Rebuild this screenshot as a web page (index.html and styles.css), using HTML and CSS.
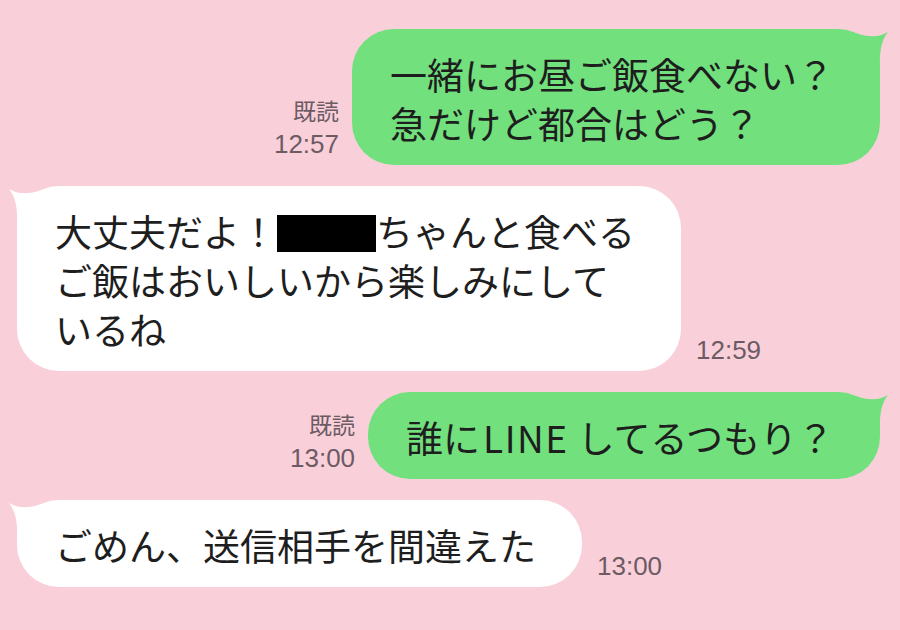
FILE: index.html
```html
<!DOCTYPE html>
<html lang="ja">
<head>
    <meta charset="UTF-8">
    <title>トーク</title>
    <link rel="stylesheet" href="styles.css">
</head>
<body>
    <div class="chat">
        <div class="row sent">
            <div class="meta">
                <span class="read">既読</span>
                <span>12:57</span>
            </div>
            <div class="bubble green">
                <svg class="tail" viewBox="-30 0 40 44"><path d="M-24,4 Q-5,11 8,3 Q-1,14 0,36 L0,44 L-30,44 Z"/></svg>
                一緒にお昼ご飯食べない？<br>急だけど都合はどう？
            </div>
        </div>

        <div class="row recv">
            <div class="bubble white">
                <svg class="tail" viewBox="-30 0 40 44"><path d="M-24,4 Q-5,11 8,3 Q-1,14 0,36 L0,44 L-30,44 Z"/></svg>
                大丈夫だよ！<span class="blackout"></span>ちゃんと食べる<br>ご飯はおいしいから楽しみにして<br>いるね
            </div>
            <div class="meta">
                <span>12:59</span>
            </div>
        </div>

        <div class="row sent">
            <div class="meta">
                <span class="read">既読</span>
                <span>13:00</span>
            </div>
            <div class="bubble green">
                <svg class="tail" viewBox="-30 0 40 44"><path d="M-24,4 Q-5,11 8,3 Q-1,14 0,36 L0,44 L-30,44 Z"/></svg>
                誰に<span class="latin">LINE</span>してるつもり？
            </div>
        </div>

        <div class="row recv">
            <div class="bubble white">
                <svg class="tail" viewBox="-30 0 40 44"><path d="M-24,4 Q-5,11 8,3 Q-1,14 0,36 L0,44 L-30,44 Z"/></svg>
                ごめん、送信相手を間違えた
            </div>
            <div class="meta">
                <span>13:00</span>
            </div>
        </div>
    </div>
</body>
</html>
```

FILE: styles.css
```css
body {
    margin: 0;
    background-color: #f9d0da;  /* ピンクの背景 */
    font-family: "Noto Sans CJK JP", sans-serif;
    color: #1e1e1e;
}
.chat {
    display: flex;
    flex-direction: column;
    gap: 21px;
    padding: 29px 20px 0 17px;
}
.row {
    display: flex;
    align-items: flex-end;
}
/* 自分のメッセージは右寄せ */
.row.sent {
    justify-content: flex-end;
    gap: 13px;
}
.row.recv {
    gap: 15px;
}
.bubble {
    position: relative;
    font-size: 37px;
    line-height: 49px;
    padding: 21px 46px 17px 38px;
    border-radius: 42px;
    white-space: nowrap;
}
.bubble.green {
    background-color: #71e07d;
}
.bubble.white {
    background-color: #ffffff;
}
/* 吹き出しのしっぽ */
.tail {
    position: absolute;
    top: 0;
    width: 40px;
    height: 44px;
}
.green .tail {
    right: -10px;
    fill: #71e07d;
}
.white .tail {
    left: -10px;
    fill: #ffffff;
    transform: scaleX(-1);
}
.latin {
    letter-spacing: 1.5px;
    margin: 0 9px 0 3px;
}
.blackout {
    display: inline-block;
    width: 99px;
    height: 37px;
    background-color: #000;
    vertical-align: -5px;
}
.meta {
    display: flex;
    flex-direction: column;
    align-items: flex-end;
    font-family: "Liberation Sans", "Noto Sans CJK JP", sans-serif;
    font-size: 26px;
    line-height: 32px;
    color: #6d5b64;
    margin-bottom: 5px;
}
.meta .read {
    font-size: 23px;
}
```
